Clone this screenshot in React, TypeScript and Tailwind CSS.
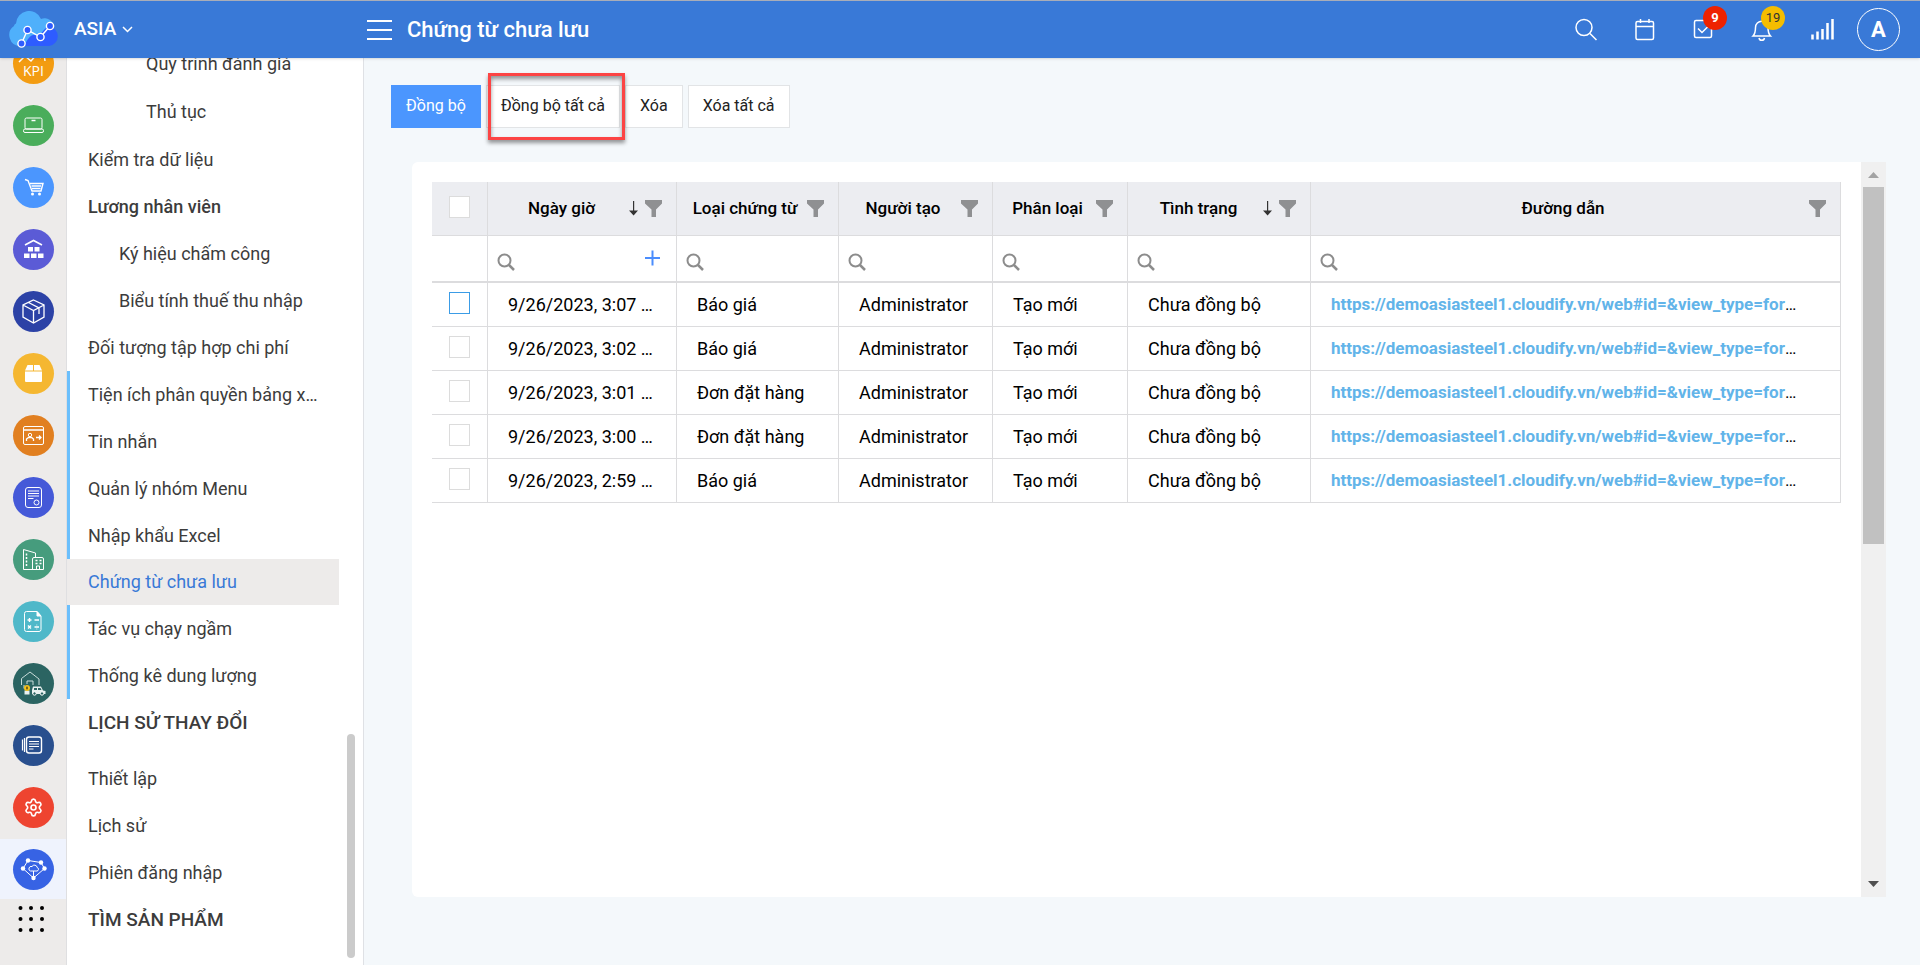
import type { ReactNode } from 'react';
import { useState } from 'react';
import { Settings } from 'lucide-react';
import clsx from 'clsx';

type RailItem = {
    label: string;
    color: string;
    icon: ReactNode;
    active?: boolean;
};

type MenuItem = {
    label: string;
    level?: 1 | 2 | 3;
    bold?: boolean;
    heading?: boolean;
    marked?: boolean;
    active?: boolean;
};

type Column = {
    label: string;
    width: string;
    sorted?: boolean;
    addable?: boolean;
};

const railItems: RailItem[] = [
    {
        label: 'KPI',
        color: 'bg-[#f39c12]',
        icon: (
            <>
                <path d="M6 19l6-6 6 5 6-7 4 4M26 12l5-1 1 7" strokeWidth="1.5" />
                <text x="20.5" y="33" textAnchor="middle" fill="#fff" stroke="none" fontSize="14" fontFamily="Open Sans, sans-serif">KPI</text>
            </>
        ),
    },
    {
        label: 'Máy tính',
        color: 'bg-[#4aad5b]',
        icon: (
            <>
                <rect x="12" y="13" width="17" height="11" rx="1.5" />
                <rect x="10.500" y="24" width="20" height="3.500" rx="1.5" />
                <path d="M18.500 15.500h4" strokeWidth="1.5" />
            </>
        ),
    },
    {
        label: 'Bán hàng',
        color: 'bg-[#4b96fe]',
        icon: (
            <>
                <path d="M12 12.500l3 1 4 10.500h9l2-7.500H17M18.500 19h9.500M19 21.500h8.500" strokeWidth="1.4" />
                <circle cx="19.500" cy="27" r="1.500" fill="#fff" stroke="none" />
                <circle cx="26.500" cy="27" r="1.500" fill="#fff" stroke="none" />
            </>
        ),
    },
    {
        label: 'Kho',
        color: 'bg-[#5b5bd6]',
        icon: (
            <>
                <path d="M12 16l8.500-4.500L29 16" strokeWidth="1.6" />
                <g fill="#fff" stroke="none">
                    <path d="M15 18h5v4.500h-5zM21.500 18h5v4.500h-5zM11 24.500h5.500V29H11zM18 24.500h5.500V29H18zM25 24.500h5.500V29H25z" />
                </g>
            </>
        ),
    },
    {
        label: 'Sản phẩm',
        color: 'bg-[#2c42a6]',
        icon: <path d="M20.500 9L31 14v12l-10.500 6L10 26V14zM10 14l10.500 5.500L31 14M20.500 19.500V32M15.500 11.500L26 17v6" strokeWidth="1.3" />,
    },
    {
        label: 'Đóng gói',
        color: 'bg-[#f5b731]',
        icon: (
            <g fill="#fff" stroke="none">
                <path d="M14.500 12h5.500v5.500h-8zM21 12h5.500l2.500 5.500h-8zM12 18.500h17V28a1 1 0 0 1-1 1H13a1 1 0 0 1-1-1z" />
            </g>
        ),
    },
    {
        label: 'Nhân sự',
        color: 'bg-[#e17f20]',
        icon: (
            <>
                <rect x="10.500" y="11.500" width="20" height="18" rx="1.5" />
                <path d="M10.500 15h20M13.500 26v-2l2-1.500h3l2 1.500v2M23 22.500h5M26 20.500l2 2-2 2" strokeWidth="1.3" />
                <circle cx="17" cy="20" r="1.700" />
            </>
        ),
    },
    {
        label: 'Hợp đồng',
        color: 'bg-[#4559d8]',
        icon: (
            <>
                <rect x="12.500" y="10.500" width="16" height="20" rx="2.500" />
                <path d="M15 14h11M15 16.500h11M15 19h11M15 21.500h5.500" />
                <circle cx="23.500" cy="25.500" r="2.500" />
            </>
        ),
    },
    {
        label: 'Tài sản',
        color: 'bg-[#469c7d]',
        icon: (
            <>
                <path d="M10.500 30.500v-20l12 3.500v4M10.500 30.500h20V20a1.500 1.500 0 0 0-1.500-1.500h-8a1.500 1.500 0 0 0-1.500 1.500v10.500M23.500 30.500v-3.500h3v3.500" />
                <path d="M13.500 14.500v13M22.500 21.500h2M26.500 21.500h2M22.500 24.500h2M26.500 24.500h2" strokeDasharray="2 1.500" strokeWidth="1.500" />
            </>
        ),
    },
    {
        label: 'Kế toán',
        color: 'bg-[#4fb8c9]',
        icon: (
            <>
                <path d="M24 10.500H13.500a2 2 0 0 0-2 2v16a2 2 0 0 0 2 2H26a2 2 0 0 0 2-2V15z" />
                <path d="M24 10.500V15h4z" fill="#fff" />
                <path d="M14.500 19h4M16.500 17v4M21.500 19h4.500M15 24.500l3 3M18 24.500l-3 3M21.500 26h4.500M23.700 23.700v.6M23.700 27.700v.6" strokeWidth="1.4" />
            </>
        ),
    },
    {
        label: 'Chi phí',
        color: 'bg-[#2b6462]',
        icon: (
            <>
                <path d="M11 25.500V22M8.500 22v-6.500L17 9l9 7v6M14 21v-3h6v4" stroke="#c9dcda" />
                <path d="M11.500 27.500h5v4h-5zM19 31v-4l1-3.500h8l2 4 2.500.500v3z" fill="#e9f1f0" stroke="none" />
                <path d="M21 25h3v2h-3zM25 25h2.500l1 2H25z" fill="#2b6462" stroke="none" />
                <circle cx="14" cy="25" r="3" fill="#f5c21b" stroke="none" />
                <path d="M14 23.500v3M13 25h2" stroke="#5b4a10" />
                <g fill="#2b6462">
                    <circle cx="21.500" cy="30.500" r="1.700" />
                    <circle cx="29" cy="30.500" r="1.700" />
                </g>
            </>
        ),
    },
    {
        label: 'Tin tức',
        color: 'bg-[#294f8e]',
        icon: (
            <>
                <rect x="13.500" y="12" width="15" height="16" rx="2.500" strokeWidth="1.4" />
                <path d="M11.500 13v14M9.500 14.500v11" strokeWidth="1.2" />
                <path d="M16 16.500h10M16 19h10M16 21.500h10M16 24h4.500" strokeWidth="1.2" />
            </>
        ),
    },
    {
        label: 'Thiết lập',
        color: 'bg-[#ee4430]',
        icon: <Settings x={10.5} y={10.5} width={20} height={20} stroke="#fff" strokeWidth={2} />,
    },
    {
        label: 'Hệ thống',
        color: 'bg-[#3763e4]',
        active: true,
        icon: (
            <>
                <path d="M15 11.500l13 2 3.500 6-11 9.500L10 19.500zM20.500 22v7" strokeWidth="1" />
                <path d="M17.500 22h6.500a1.800 1.800 0 0 0 .200-3.500 2.800 2.800 0 0 0-5.200-1 2.300 2.300 0 0 0-1.500 4.500z" fill="#3763e4" />
                <g fill="#fff" stroke="none">
                    <circle cx="15" cy="11.500" r="2.200" />
                    <circle cx="28" cy="13.500" r="2.200" />
                    <circle cx="10" cy="19.500" r="2.200" />
                    <circle cx="31.500" cy="19.500" r="2.200" />
                    <circle cx="20.500" cy="29" r="2.200" />
                </g>
            </>
        ),
    },
];

const topMenu: MenuItem[] = [
    { label: 'Quy trình đánh giá', level: 3 },
    { label: 'Thủ tục', level: 3 },
    { label: 'Kiểm tra dữ liệu' },
    { label: 'Lương nhân viên', bold: true },
    { label: 'Ký hiệu chấm công', level: 2 },
    { label: 'Biểu tính thuế thu nhập', level: 2 },
    { label: 'Đối tượng tập hợp chi phí' },
    { label: 'Tiện ích phân quyền bảng x…', marked: true },
    { label: 'Tin nhắn', marked: true },
    { label: 'Quản lý nhóm Menu', marked: true },
    { label: 'Nhập khẩu Excel', marked: true },
    { label: 'Chứng từ chưa lưu', active: true },
    { label: 'Tác vụ chạy ngầm', marked: true },
    { label: 'Thống kê dung lượng', marked: true },
    { label: 'LỊCH SỬ THAY ĐỔI', heading: true },
];

const bottomMenu: MenuItem[] = [
    { label: 'Thiết lập' },
    { label: 'Lịch sử' },
    { label: 'Phiên đăng nhập' },
    { label: 'TÌM SẢN PHẨM', heading: true },
];

const columns: Column[] = [
    { label: 'Ngày giờ', width: 'w-[189px]', sorted: true, addable: true },
    { label: 'Loại chứng từ', width: 'w-[162px]' },
    { label: 'Người tạo', width: 'w-[154px]' },
    { label: 'Phân loại', width: 'w-[135px]' },
    { label: 'Tình trạng', width: 'w-[183px]', sorted: true },
    { label: 'Đường dẫn', width: '' },
];

const rows = [
    { time: '9/26/2023, 3:07 …', type: 'Báo giá' },
    { time: '9/26/2023, 3:02 …', type: 'Báo giá' },
    { time: '9/26/2023, 3:01 …', type: 'Đơn đặt hàng' },
    { time: '9/26/2023, 3:00 …', type: 'Đơn đặt hàng' },
    { time: '9/26/2023, 2:59 …', type: 'Báo giá' },
];

function Logo() {
    return (
        <svg width="52" height="38" viewBox="8 10 52 38" fill="none">
            <path d="M20 45a11 11 0 0 1-6-20c0-1 1-2 2-2.500A13 13 0 0 1 41 18a9.500 9.500 0 0 1 13 8L48 45z" fill="#4fb0fb" />
            <path d="M24 45c4-7 6-12 13-11 5 1 6-7 12-8.500a9.800 9.800 0 0 1 0 19.500z" fill="#2e5cff" />
            <path d="M21.500 42.500L27.500 29l13 7L50 25" stroke="#fff" strokeWidth="1.400" />
            <g stroke="#fff" strokeWidth="1.400" fill="#2e5cff">
                <circle cx="21.500" cy="42.500" r="3.600" />
                <circle cx="27.500" cy="29" r="3.600" />
                <circle cx="40.500" cy="36" r="3.600" />
                <circle cx="50" cy="25" r="3.600" />
            </g>
        </svg>
    );
}

function FilterIcon() {
    return (
        <svg width="17" height="17" viewBox="0 0 17 17" className="shrink-0" fill="#8f9092">
            <path d="M0 0h17v3.500L11 9.500V17H6.500V9.500L0 3.500z" />
        </svg>
    );
}

function SortIcon() {
    return (
        <svg width="9" height="15" viewBox="0 0 9 15" className="shrink-0" fill="#333">
            <path d="M4 0h1.200v9.500H9L4.600 14.500 0 9.500h4z" />
        </svg>
    );
}

function MagnifierIcon() {
    return (
        <svg width="18" height="18" viewBox="0 0 18 18" className="shrink-0" fill="none" stroke="#8c8c8c">
            <circle cx="7.500" cy="7.500" r="6" strokeWidth="2" />
            <path d="M12 12l5 5" strokeWidth="2.500" />
        </svg>
    );
}

function HeaderButton({ label, badge, children }: { label: string; badge?: ReactNode; children: ReactNode }) {
    return (
        <button type="button" aria-label={label} className="relative flex h-12 w-[58px] items-center justify-center">
            <svg width="28" height="24" viewBox="-2 0 28 24" fill="none" stroke="#fff" strokeWidth="1.500">
                {children}
            </svg>
            {badge}
        </button>
    );
}

function Header() {
    return (
        <header className="relative z-10 flex h-[58px] shrink-0 items-center border-t border-[#a9adb8] bg-[#3979d7] text-white shadow-sm">
            <div className="flex w-[367px] items-center pl-2">
                <Logo />
                <button type="button" className="ml-[14px] flex items-center gap-[6px] text-[19px] font-medium">
                    ASIA
                    <svg width="11" height="7" viewBox="0 0 11 7" fill="none" stroke="#fff" strokeWidth="1.500">
                        <path d="M1 1l4.500 4.500L10 1" />
                    </svg>
                </button>
            </div>
            <button type="button" aria-label="Menu" className="mr-[15px]">
                <svg width="25" height="20" viewBox="0 0 25 20" stroke="#fff" strokeWidth="2">
                    <path d="M0 1h25M0 10h25M0 19h25" />
                </svg>
            </button>
            <h1 className="flex-1 text-[22px] font-medium">Chứng từ chưa lưu</h1>
            <nav className="flex items-center pr-5">
                <HeaderButton label="Tìm kiếm">
                    <circle cx="8" cy="9.500" r="8" />
                    <path d="M14 15.500l6.500 6.500" />
                </HeaderButton>
                <HeaderButton label="Lịch">
                    <rect x="2" y="3.500" width="17.500" height="18" rx="1.500" />
                    <path d="M2 8.500h17.500M6.500 1v4M15 1v4" />
                </HeaderButton>
                <HeaderButton
                    label="Công việc"
                    badge={<span className="absolute top-0 left-[28px] flex size-6 items-center justify-center rounded-full bg-[#ee2200] text-[13px] font-bold">9</span>}
                >
                    <rect x="2.500" y="2.500" width="17" height="17" rx="1.500" />
                    <path d="M6 10.500l4 4 6-6" />
                </HeaderButton>
                <HeaderButton
                    label="Thông báo"
                    badge={<span className="absolute top-0 left-[28px] flex size-6 items-center justify-center rounded-full bg-[#f5bd00] text-[13px] text-[#333]">19</span>}
                >
                    <path d="M3 18h17.500c-2.500-2.500-2.500-4.500-2.500-8.500a6.200 6.200 0 0 0-12.500 0c0 4 0 6-2.500 8.500zM9 20a2.800 2.800 0 0 0 5.500 0" />
                </HeaderButton>
                <HeaderButton label="Tín hiệu">
                    <path d="M4.500 21.500v-5M9.500 21.500v-8M14.500 21.500V11M19.500 21.500V5M24.500 21.500V1" strokeWidth="2.500" />
                </HeaderButton>
                <button type="button" className="ml-2 flex size-[43px] items-center justify-center rounded-full border border-white text-[22px] font-bold">
                    A
                </button>
            </nav>
        </header>
    );
}

function IconRail() {
    return (
        <nav className="w-[67px] shrink-0 overflow-hidden border-r border-[#dfdfe1] bg-[#edebea]">
            <div className="-mt-[25px] flex flex-col gap-[2px]">
                {railItems.map((item) => (
                    <a
                        key={item.label}
                        href="#"
                        aria-label={item.label}
                        className={clsx('flex h-[60px] items-center justify-center', item.active && 'bg-[#eff3fd]')}
                    >
                        <span className={clsx('size-[41px] rounded-full', item.color)}>
                            <svg width="41" height="41" viewBox="0 0 41 41" fill="none" stroke="#fff" strokeWidth="1">
                                {item.icon}
                            </svg>
                        </span>
                    </a>
                ))}
            </div>
            <button type="button" aria-label="Ứng dụng" className="mt-1 ml-4">
                <svg width="30" height="32" viewBox="0 0 30 32" fill="#000">
                    {[5, 16, 27].map((y) => [4.5, 15, 26].map((x) => <circle key={`${x}-${y}`} cx={x} cy={y} r="2" />))}
                </svg>
            </button>
        </nav>
    );
}

function MenuLink({ item }: { item: MenuItem }) {
    const level = item.level ?? 1;
    return (
        <li className="pr-6">
            <a
                href="#"
                className={clsx(
                    'flex items-center border-l-3 whitespace-nowrap',
                    item.active ? 'h-[46px]' : level === 3 || item.heading ? 'h-[48px]' : 'h-[47px]',
                    level === 1 && 'pl-[18px]',
                    level === 2 && 'pl-[49px]',
                    level === 3 && 'pl-[76px]',
                    item.marked ? 'border-[#6bbffc]' : 'border-transparent',
                    item.active ? 'bg-[#edebea] text-[#3979d7]' : 'text-[#3c3c3c]',
                    item.heading ? 'text-[19px]' : 'text-lg',
                    (item.bold || item.heading) && 'font-medium',
                )}
            >
                {item.label}
            </a>
        </li>
    );
}

function SideMenu() {
    return (
        <aside className="relative w-[297px] shrink-0 overflow-hidden border-r border-[#dfe1e5] bg-white">
            <ul className="-mt-[18px]">
                {topMenu.map((item) => <MenuLink key={item.label} item={item} />)}
            </ul>
            <ul className="mt-2">
                {bottomMenu.map((item) => <MenuLink key={item.label} item={item} />)}
            </ul>
            <div className="absolute right-2 bottom-[7px] h-[224px] w-2 rounded-full bg-[#cbcbcb]" />
        </aside>
    );
}

function Toolbar() {
    const plain = 'h-[43px] border border-[#e2e4e6] bg-white px-[14px] pb-[2px] text-[#222]';
    return (
        <div className="flex gap-[5px] pl-[27px] text-base">
            <button type="button" className="h-[43px] w-[90px] bg-[#4b96fe] pb-[2px] text-white">Đồng bộ</button>
            <div className="relative">
                <button type="button" className={plain}>Đồng bộ tất cả</button>
                <div className="pointer-events-none absolute -inset-y-3 -right-[5px] left-[2px] border-3 border-[#fc4444] shadow-[0_3px_4px_rgba(0,0,0,0.4),inset_0_3px_4px_rgba(0,0,0,0.4)]" />
            </div>
            <button type="button" className={plain}>Xóa</button>
            <button type="button" className={plain}>Xóa tất cả</button>
        </div>
    );
}

function GridCheckbox({ label, checked, focused, onChange }: { label: string; checked: boolean; focused?: boolean; onChange: () => void }) {
    return (
        <input
            type="checkbox"
            aria-label={label}
            checked={checked}
            onChange={onChange}
            className={clsx(
                'mx-auto mb-[4px] block h-[22px] w-[21px] appearance-none border bg-white checked:bg-[#4b96fe]',
                focused ? 'border-[#3b9ce6]' : 'border-[#dcdcdc]',
            )}
        />
    );
}

function DocumentTable() {
    const [selected, setSelected] = useState<number[]>([]);
    const allSelected = selected.length === rows.length;

    const toggle = (index: number) => {
        setSelected((prev) => (prev.includes(index) ? prev.filter((i) => i !== index) : [...prev, index]));
    };

    return (
        <table className="w-full table-fixed border-separate border-spacing-0 border-r border-[#dcdcde] text-lg text-black">
            <thead>
                <tr className="h-[54px] bg-[#ecedf1]">
                    <th className="w-14 border-r border-b border-[#dcdcde] p-0">
                        <GridCheckbox label="Chọn tất cả" checked={allSelected} onChange={() => setSelected(allSelected ? [] : rows.map((_, i) => i))} />
                    </th>
                    {columns.map((col) => (
                        <th key={col.label} className={clsx('border-b border-[#dcdcde] p-0 text-[17px] font-medium not-last:border-r', col.width)}>
                            <div className="flex items-center gap-[7px] pr-[14px] pl-[6px]">
                                <span className="-mr-[7px] flex-1 whitespace-nowrap">{col.label}</span>
                                {col.sorted && <SortIcon />}
                                <FilterIcon />
                            </div>
                        </th>
                    ))}
                </tr>
                <tr className="h-[47px]">
                    <td className="border-r border-b-2 border-[#dcdcde] p-0" />
                    {columns.map((col) => (
                        <td key={col.label} className="border-b-2 border-[#dcdcde] p-0 not-last:border-r">
                            <label className="flex items-center gap-2 pt-[6px] pr-4 pl-[9px]">
                                <MagnifierIcon />
                                <input type="text" aria-label={`Lọc ${col.label}`} className="h-6 w-full min-w-0 outline-none" />
                                {col.addable && (
                                    <svg width="15" height="24" viewBox="0 0 15 24" className="shrink-0" stroke="#4b8dfd" strokeWidth="2">
                                        <path d="M0 8h15M7.500 .5v15" />
                                    </svg>
                                )}
                            </label>
                        </td>
                    ))}
                </tr>
            </thead>
            <tbody>
                {rows.map((row, index) => (
                    <tr key={row.time} className="h-11 [&>td]:border-b [&>td]:border-[#dcdcde] [&>td]:px-5 [&>td]:py-0 [&>td]:whitespace-nowrap [&>td:not(:last-child)]:border-r">
                        <td className="!px-0">
                            <GridCheckbox label={`Chọn ${row.time}`} checked={selected.includes(index)} focused={index === 0} onChange={() => toggle(index)} />
                        </td>
                        <td>{row.time}</td>
                        <td>{row.type}</td>
                        <td>Administrator</td>
                        <td>Tạo mới</td>
                        <td>Chưa đồng bộ</td>
                        <td className="text-[17px]">
                            <a href="#" className="font-bold text-[#62b4e9]">https://demoasiasteel1.cloudify.vn/web#id=&amp;view_type=for</a>…
                        </td>
                    </tr>
                ))}
            </tbody>
        </table>
    );
}

function PanelScrollbar() {
    return (
        <div className="flex w-[25px] shrink-0 flex-col items-center bg-[#f0f0f0]">
            <svg width="25" height="25" viewBox="0 0 25 25" fill="#a3a3a3">
                <path d="M7 16l5.500-6 5.500 6z" />
            </svg>
            <div className="h-[357px] w-[21px] bg-[#c1c1c1]" />
            <svg width="25" height="25" viewBox="0 0 25 25" fill="#505050" className="mt-auto">
                <path d="M7 9l5.500 6L18 9z" />
            </svg>
        </div>
    );
}

export default function App() {
    return (
        <div className="flex h-screen flex-col overflow-hidden bg-[#f4f8fb] font-['Roboto',sans-serif]">
            <Header />
            <div className="flex min-h-0 flex-1">
                <IconRail />
                <SideMenu />
                <main className="flex min-w-0 flex-1 flex-col pt-[27px] pr-[34px] pb-[68px]">
                    <Toolbar />
                    <section className="mt-[34px] ml-12 flex min-h-0 flex-1 overflow-hidden rounded-l-md bg-white">
                        <div className="min-w-0 flex-1 p-5">
                            <DocumentTable />
                        </div>
                        <PanelScrollbar />
                    </section>
                </main>
            </div>
        </div>
    );
}
